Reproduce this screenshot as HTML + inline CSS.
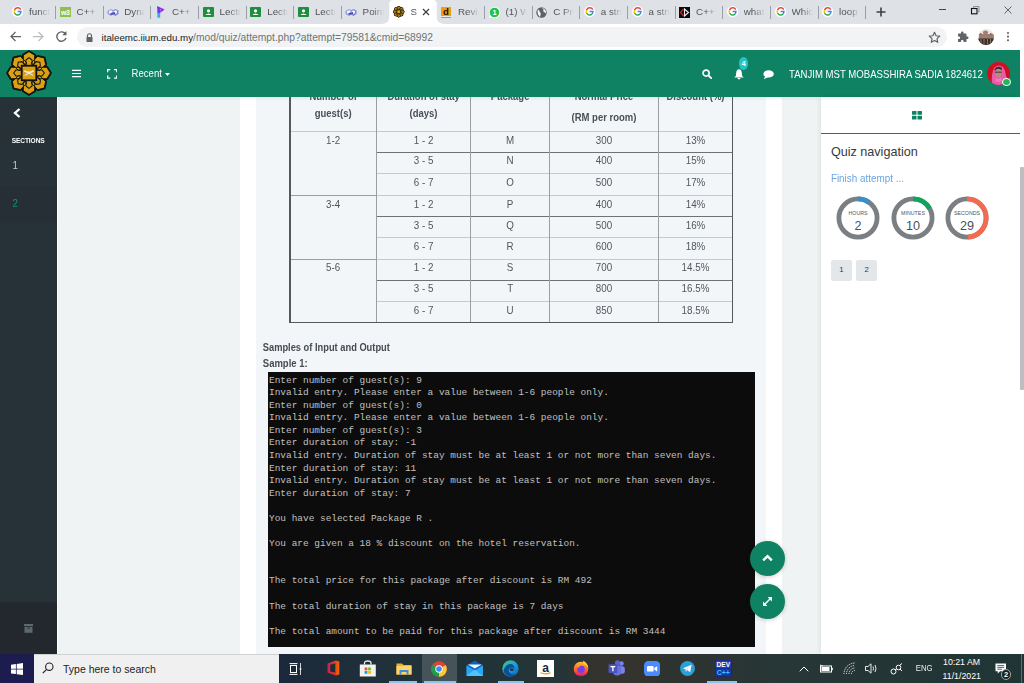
<!DOCTYPE html>
<html><head><meta charset="utf-8">
<style>
*{margin:0;padding:0;box-sizing:border-box}
html,body{width:1024px;height:683px;overflow:hidden;background:#fff;font-family:"Liberation Sans",sans-serif}
.a{position:absolute}
.t{position:absolute;white-space:nowrap;line-height:1}
#tabs{left:0;top:0;width:1024px;height:24px;background:#dee1e6}
#toolbar{left:0;top:24px;width:1024px;height:26px;background:#fff}
#omni{left:77px;top:27px;width:870px;height:20px;border-radius:10px;background:#f1f3f4}
#nav{left:0;top:50px;width:1020px;height:47px;background:#0f8264}
#side{left:0;top:97px;width:57px;height:557px;background:#273238}
#sidefoot{left:0;top:602px;width:57px;height:52px;background:#22282e}
#content{left:57px;top:97px;width:764px;height:557px;background:#eff3f4}
#col{left:240px;top:97px;width:542px;height:557px;background:#fff}
#qbox{left:256px;top:97px;width:510px;height:557px;background:#f3f6f9}
#drawer{left:821px;top:97px;width:199px;height:557px;background:#fff;box-shadow:-2px 0 4px rgba(0,0,0,.06)}
#sb{left:1020px;top:50px;width:4px;height:604px;background:#fff}
#taskbar{left:0;top:654px;width:1024px;height:29px;background:linear-gradient(90deg,#1d1c4e 0px,#1d1c4e 34px,#1b283b 280px,#20313a 385px,#223337 490px,#253538 560px,#35332d 600px,#35332e 630px,#2e332f 670px,#283636 770px,#1f3535 1024px)}
.tabtxt{position:absolute;top:6.3px;font-size:9.8px;color:#505357;white-space:nowrap;overflow:hidden;width:21px;line-height:11px;
 -webkit-mask-image:linear-gradient(90deg,#000 45%,transparent 100%)}
.sep{position:absolute;top:6px;width:1px;height:13px;background:#9aa0a6}
.con{position:absolute;left:268px;top:372px;width:487px;height:275px;background:#0c0c0c}
.cl{position:absolute;left:269px;font-family:"Liberation Mono",monospace;font-size:9.45px;color:#c0c0c0;white-space:pre;line-height:1}
.td{position:absolute;font-size:9.6px;color:#495057;white-space:nowrap;line-height:1;text-align:center}
</style></head><body>
<div id="tabs" class="a"></div>
<div id="toolbar" class="a"></div>
<div id="omni" class="a"></div>
<div id="nav" class="a"></div>
<div id="content" class="a"></div>
<div id="col" class="a"></div>
<div id="qbox" class="a"></div>
<div id="side" class="a"></div>
<div id="sidefoot" class="a"></div>
<div id="drawer" class="a"></div>
<div id="sb" class="a"></div>
<div id="taskbar" class="a"></div>
<svg class="a" style="left:380.6px;top:0" width="64" height="24" viewBox="0 0 63.66 24"><path d="M0 24 Q8 24 8 17 V4 Q8 0 12 0 H51.66 Q55.66 0 55.66 4 V17 Q55.66 24 63.66 24Z" fill="#fff"/></svg>
<svg class="a" style="left:12.0px;top:6.4px" width="11.2" height="11.2" viewBox="-6 -6 12 12"><circle r="6" fill="#fff"/><g fill="none" stroke-width="1.55"><path d="M3.4 -2.2 A3.65 3.65 0 0 0 -3.3 -1.5" stroke="#ea4335"/><path d="M-3.3 -1.5 A3.65 3.65 0 0 0 -3.3 1.5" stroke="#fbbc05"/><path d="M-3.3 1.5 A3.65 3.65 0 0 0 2.6 2.6" stroke="#34a853"/><path d="M2.6 2.6 A3.65 3.65 0 0 0 3.65 0 H0" stroke="#4285f4"/></g></svg>
<div class="tabtxt" style="left:29.0px">funct</div>
<div class="sep" style="left:55px"></div>
<div class="a" style="left:59.7px;top:7px;width:11px;height:10px;background:#8cc04f"></div><div class="t" style="left:59.7px;top:8.5px;width:11px;text-align:center;font-size:7px;font-weight:bold;color:#fff;letter-spacing:-0.5px">w3</div>
<div class="tabtxt" style="left:76.6px">C++</div>
<div class="sep" style="left:103px"></div>
<svg class="a" style="left:106.9px;top:7.5px" width="12" height="9" viewBox="0 0 12 9"><path d="M0.5 3 L4 1 L7 2.5 L7 6 L4 8 L0.5 6Z" fill="#9c9ee6"/><path d="M5 3 L8.5 1 L11.5 2.5 L11.5 6 L8.5 8 L5 6Z" fill="#8486d8"/><path d="M2 3.2 L4 2.2 L5.5 3 L5.5 5 L3.5 6 L2 5.2Z M6.5 3.2 L8.5 2.2 L10 3 L10 5 L8 6 L6.5 5.2Z" fill="#f4f4ff"/><path d="M3.5 5 L8 4 L8 6 L3.5 7Z" fill="#4e50a8"/></svg>
<div class="tabtxt" style="left:124.3px">Dyna</div>
<div class="sep" style="left:150px"></div>
<svg class="a" style="left:156.5px;top:6px" width="8" height="12" viewBox="0 0 8 12"><path d="M0.3 0.3 L7.7 3.6 L3.2 6.8 L3.2 4.2 L4.2 3.6 L0.3 2.2Z" fill="#8f2fe6"/><path d="M0.3 0.3 L3.2 1.6 L3.2 7 L0.3 7Z" fill="#6a3cf0"/><path d="M0.3 7 L3.2 7 L3.2 11.7 L0.3 11.7Z" fill="#2bb0f7"/></svg>
<div class="tabtxt" style="left:171.9px">C++</div>
<div class="sep" style="left:198px"></div>
<svg class="a" style="left:202.7px;top:7px" width="11" height="10" viewBox="0 0 11 10"><rect width="11" height="10" rx="1" fill="#1e8e3e"/><circle cx="5.5" cy="3.8" r="1.6" fill="#fff"/><path d="M2.2 8 Q5.5 4.8 8.8 8Z" fill="#fff"/></svg>
<div class="tabtxt" style="left:219.6px">Lectu</div>
<div class="sep" style="left:246px"></div>
<svg class="a" style="left:250.3px;top:7px" width="11" height="10" viewBox="0 0 11 10"><rect width="11" height="10" rx="1" fill="#1e8e3e"/><circle cx="5.5" cy="3.8" r="1.6" fill="#fff"/><path d="M2.2 8 Q5.5 4.8 8.8 8Z" fill="#fff"/></svg>
<div class="tabtxt" style="left:267.2px">Lectu</div>
<div class="sep" style="left:293px"></div>
<svg class="a" style="left:298.0px;top:7px" width="11" height="10" viewBox="0 0 11 10"><rect width="11" height="10" rx="1" fill="#1e8e3e"/><circle cx="5.5" cy="3.8" r="1.6" fill="#fff"/><path d="M2.2 8 Q5.5 4.8 8.8 8Z" fill="#fff"/></svg>
<div class="tabtxt" style="left:314.9px">Lectu</div>
<div class="sep" style="left:341px"></div>
<svg class="a" style="left:345.2px;top:7.5px" width="12" height="9" viewBox="0 0 12 9"><path d="M0.5 3 L4 1 L7 2.5 L7 6 L4 8 L0.5 6Z" fill="#9c9ee6"/><path d="M5 3 L8.5 1 L11.5 2.5 L11.5 6 L8.5 8 L5 6Z" fill="#8486d8"/><path d="M2 3.2 L4 2.2 L5.5 3 L5.5 5 L3.5 6 L2 5.2Z M6.5 3.2 L8.5 2.2 L10 3 L10 5 L8 6 L6.5 5.2Z" fill="#f4f4ff"/><path d="M3.5 5 L8 4 L8 6 L3.5 7Z" fill="#4e50a8"/></svg>
<div class="tabtxt" style="left:362.6px">Point</div>
<svg class="a" style="left:393.05px;top:6.25px" width="11.5" height="11.5" viewBox="-24 -24 48 48"><path transform="rotate(0)" d="M0 -22.3 L5.9 -18.6 L5.9 -9.5 L0 -5 L-5.9 -9.5 L-5.9 -18.6Z" fill="#111" stroke="#111" stroke-width="4.800000000000001" stroke-linejoin="round"/><path transform="rotate(45)" d="M0 -22.3 L5.9 -18.6 L5.9 -9.5 L0 -5 L-5.9 -9.5 L-5.9 -18.6Z" fill="#111" stroke="#111" stroke-width="4.800000000000001" stroke-linejoin="round"/><path transform="rotate(90)" d="M0 -22.3 L5.9 -18.6 L5.9 -9.5 L0 -5 L-5.9 -9.5 L-5.9 -18.6Z" fill="#111" stroke="#111" stroke-width="4.800000000000001" stroke-linejoin="round"/><path transform="rotate(135)" d="M0 -22.3 L5.9 -18.6 L5.9 -9.5 L0 -5 L-5.9 -9.5 L-5.9 -18.6Z" fill="#111" stroke="#111" stroke-width="4.800000000000001" stroke-linejoin="round"/><path transform="rotate(180)" d="M0 -22.3 L5.9 -18.6 L5.9 -9.5 L0 -5 L-5.9 -9.5 L-5.9 -18.6Z" fill="#111" stroke="#111" stroke-width="4.800000000000001" stroke-linejoin="round"/><path transform="rotate(225)" d="M0 -22.3 L5.9 -18.6 L5.9 -9.5 L0 -5 L-5.9 -9.5 L-5.9 -18.6Z" fill="#111" stroke="#111" stroke-width="4.800000000000001" stroke-linejoin="round"/><path transform="rotate(270)" d="M0 -22.3 L5.9 -18.6 L5.9 -9.5 L0 -5 L-5.9 -9.5 L-5.9 -18.6Z" fill="#111" stroke="#111" stroke-width="4.800000000000001" stroke-linejoin="round"/><path transform="rotate(315)" d="M0 -22.3 L5.9 -18.6 L5.9 -9.5 L0 -5 L-5.9 -9.5 L-5.9 -18.6Z" fill="#111" stroke="#111" stroke-width="4.800000000000001" stroke-linejoin="round"/><path transform="rotate(0)" d="M0 -22.3 L5.9 -18.6 L5.9 -9.5 L0 -5 L-5.9 -9.5 L-5.9 -18.6Z" fill="#daa112"/><path transform="rotate(45)" d="M0 -22.3 L5.9 -18.6 L5.9 -9.5 L0 -5 L-5.9 -9.5 L-5.9 -18.6Z" fill="#daa112"/><path transform="rotate(90)" d="M0 -22.3 L5.9 -18.6 L5.9 -9.5 L0 -5 L-5.9 -9.5 L-5.9 -18.6Z" fill="#daa112"/><path transform="rotate(135)" d="M0 -22.3 L5.9 -18.6 L5.9 -9.5 L0 -5 L-5.9 -9.5 L-5.9 -18.6Z" fill="#daa112"/><path transform="rotate(180)" d="M0 -22.3 L5.9 -18.6 L5.9 -9.5 L0 -5 L-5.9 -9.5 L-5.9 -18.6Z" fill="#daa112"/><path transform="rotate(225)" d="M0 -22.3 L5.9 -18.6 L5.9 -9.5 L0 -5 L-5.9 -9.5 L-5.9 -18.6Z" fill="#daa112"/><path transform="rotate(270)" d="M0 -22.3 L5.9 -18.6 L5.9 -9.5 L0 -5 L-5.9 -9.5 L-5.9 -18.6Z" fill="#daa112"/><path transform="rotate(315)" d="M0 -22.3 L5.9 -18.6 L5.9 -9.5 L0 -5 L-5.9 -9.5 L-5.9 -18.6Z" fill="#daa112"/><path transform="rotate(0)" d="M0 -22.3 L5.9 -18.6 L5.9 -9.5 L0 -5 L-5.9 -9.5 L-5.9 -18.6Z" fill="none" stroke="#111" stroke-width="1.4400000000000002"/><path transform="rotate(45)" d="M0 -22.3 L5.9 -18.6 L5.9 -9.5 L0 -5 L-5.9 -9.5 L-5.9 -18.6Z" fill="none" stroke="#111" stroke-width="1.4400000000000002"/><path transform="rotate(90)" d="M0 -22.3 L5.9 -18.6 L5.9 -9.5 L0 -5 L-5.9 -9.5 L-5.9 -18.6Z" fill="none" stroke="#111" stroke-width="1.4400000000000002"/><path transform="rotate(135)" d="M0 -22.3 L5.9 -18.6 L5.9 -9.5 L0 -5 L-5.9 -9.5 L-5.9 -18.6Z" fill="none" stroke="#111" stroke-width="1.4400000000000002"/><path transform="rotate(180)" d="M0 -22.3 L5.9 -18.6 L5.9 -9.5 L0 -5 L-5.9 -9.5 L-5.9 -18.6Z" fill="none" stroke="#111" stroke-width="1.4400000000000002"/><path transform="rotate(225)" d="M0 -22.3 L5.9 -18.6 L5.9 -9.5 L0 -5 L-5.9 -9.5 L-5.9 -18.6Z" fill="none" stroke="#111" stroke-width="1.4400000000000002"/><path transform="rotate(270)" d="M0 -22.3 L5.9 -18.6 L5.9 -9.5 L0 -5 L-5.9 -9.5 L-5.9 -18.6Z" fill="none" stroke="#111" stroke-width="1.4400000000000002"/><path transform="rotate(315)" d="M0 -22.3 L5.9 -18.6 L5.9 -9.5 L0 -5 L-5.9 -9.5 L-5.9 -18.6Z" fill="none" stroke="#111" stroke-width="1.4400000000000002"/><circle r="9.5" fill="#daa112"/><path transform="rotate(0)" d="M-3.2 -7 L-3.2 -13.6 L0 -16 L3.2 -13.6 L3.2 -7" fill="none" stroke="#111" stroke-width="1.7600000000000002"/><path transform="rotate(45)" d="M-3.2 -7 L-3.2 -13.6 L0 -16 L3.2 -13.6 L3.2 -7" fill="none" stroke="#111" stroke-width="1.7600000000000002"/><path transform="rotate(90)" d="M-3.2 -7 L-3.2 -13.6 L0 -16 L3.2 -13.6 L3.2 -7" fill="none" stroke="#111" stroke-width="1.7600000000000002"/><path transform="rotate(135)" d="M-3.2 -7 L-3.2 -13.6 L0 -16 L3.2 -13.6 L3.2 -7" fill="none" stroke="#111" stroke-width="1.7600000000000002"/><path transform="rotate(180)" d="M-3.2 -7 L-3.2 -13.6 L0 -16 L3.2 -13.6 L3.2 -7" fill="none" stroke="#111" stroke-width="1.7600000000000002"/><path transform="rotate(225)" d="M-3.2 -7 L-3.2 -13.6 L0 -16 L3.2 -13.6 L3.2 -7" fill="none" stroke="#111" stroke-width="1.7600000000000002"/><path transform="rotate(270)" d="M-3.2 -7 L-3.2 -13.6 L0 -16 L3.2 -13.6 L3.2 -7" fill="none" stroke="#111" stroke-width="1.7600000000000002"/><path transform="rotate(315)" d="M-3.2 -7 L-3.2 -13.6 L0 -16 L3.2 -13.6 L3.2 -7" fill="none" stroke="#111" stroke-width="1.7600000000000002"/><rect x="-7.6" y="-7.6" width="15.2" height="15.2" fill="#daa112" stroke="#111" stroke-width="3.04"/></svg>
<div class="tabtxt" style="left:410.6px;width:9px">S</div>
<svg class="a" style="left:421.6px;top:8px" width="8" height="8" viewBox="0 0 8 8"><path d="M1 1L7 7M7 1L1 7" stroke="#3c4043" stroke-width="1.2"/></svg>
<div class="a" style="left:441.0px;top:7px;width:10px;height:10px;background:#f39c12;border-bottom:1px solid #e8e8e8;box-shadow:0 1px 0 #999"></div><div class="t" style="left:442.9px;top:7.4px;font-size:9.5px;font-weight:bold;color:#111">d</div>
<div class="tabtxt" style="left:457.9px">Revie</div>
<div class="sep" style="left:484px"></div>
<svg class="a" style="left:487.6px;top:5.5px" width="13" height="13" viewBox="-6.5 -6.5 13 13"><path d="M-5.6 5.6 L-4.6 2.6 A5.5 5.5 0 1 1 -2.4 4.8Z" fill="#fff"/><circle r="4.8" fill="#25c24f"/><text x="0" y="2.7" font-size="7.5" font-weight="bold" text-anchor="middle" fill="#fff" font-family="Liberation Sans">1</text></svg>
<div class="tabtxt" style="left:505.5px">(1) W</div>
<div class="sep" style="left:532px"></div>
<svg class="a" style="left:536.3px;top:6.5px" width="11" height="11" viewBox="-5.5 -5.5 11 11"><circle r="5.2" fill="#5f6368"/><path d="M-3.8 -3 Q-1.5 -2.5 -1.8 -0.5 Q0 0.5 -1 2.5 L-1.5 4.5 Q-4.5 2 -3.8 -3Z M0.5 -4.8 Q2.8 -3 1.8 -1 Q3.5 0 4.6 1 Q5 -3 0.5 -4.8Z" fill="#fff" opacity=".95"/></svg>
<div class="tabtxt" style="left:553.2px">C Pro</div>
<div class="sep" style="left:579px"></div>
<svg class="a" style="left:583.8px;top:6.4px" width="11.2" height="11.2" viewBox="-6 -6 12 12"><circle r="6" fill="#fff"/><g fill="none" stroke-width="1.55"><path d="M3.4 -2.2 A3.65 3.65 0 0 0 -3.3 -1.5" stroke="#ea4335"/><path d="M-3.3 -1.5 A3.65 3.65 0 0 0 -3.3 1.5" stroke="#fbbc05"/><path d="M-3.3 1.5 A3.65 3.65 0 0 0 2.6 2.6" stroke="#34a853"/><path d="M2.6 2.6 A3.65 3.65 0 0 0 3.65 0 H0" stroke="#4285f4"/></g></svg>
<div class="tabtxt" style="left:600.8px">a stru</div>
<div class="sep" style="left:627px"></div>
<svg class="a" style="left:631.5px;top:6.4px" width="11.2" height="11.2" viewBox="-6 -6 12 12"><circle r="6" fill="#fff"/><g fill="none" stroke-width="1.55"><path d="M3.4 -2.2 A3.65 3.65 0 0 0 -3.3 -1.5" stroke="#ea4335"/><path d="M-3.3 -1.5 A3.65 3.65 0 0 0 -3.3 1.5" stroke="#fbbc05"/><path d="M-3.3 1.5 A3.65 3.65 0 0 0 2.6 2.6" stroke="#34a853"/><path d="M2.6 2.6 A3.65 3.65 0 0 0 3.65 0 H0" stroke="#4285f4"/></g></svg>
<div class="tabtxt" style="left:648.5px">a stru</div>
<div class="sep" style="left:675px"></div>
<svg class="a" style="left:679.2px;top:6.5px" width="11" height="11" viewBox="0 0 11 11"><rect width="11" height="11" fill="#0a0a0a"/><path d="M4.5 2 L1.5 5.5 L4.5 9" fill="none" stroke="#c62828" stroke-width="1.2"/><path d="M5.5 2 L9.5 5.5 L5.5 9Z" fill="none" stroke="#eee" stroke-width="1.1"/></svg>
<div class="tabtxt" style="left:696.1px">C++</div>
<div class="sep" style="left:722px"></div>
<svg class="a" style="left:726.8px;top:6.4px" width="11.2" height="11.2" viewBox="-6 -6 12 12"><circle r="6" fill="#fff"/><g fill="none" stroke-width="1.55"><path d="M3.4 -2.2 A3.65 3.65 0 0 0 -3.3 -1.5" stroke="#ea4335"/><path d="M-3.3 -1.5 A3.65 3.65 0 0 0 -3.3 1.5" stroke="#fbbc05"/><path d="M-3.3 1.5 A3.65 3.65 0 0 0 2.6 2.6" stroke="#34a853"/><path d="M2.6 2.6 A3.65 3.65 0 0 0 3.65 0 H0" stroke="#4285f4"/></g></svg>
<div class="tabtxt" style="left:743.8px">what</div>
<div class="sep" style="left:770px"></div>
<svg class="a" style="left:774.5px;top:6.4px" width="11.2" height="11.2" viewBox="-6 -6 12 12"><circle r="6" fill="#fff"/><g fill="none" stroke-width="1.55"><path d="M3.4 -2.2 A3.65 3.65 0 0 0 -3.3 -1.5" stroke="#ea4335"/><path d="M-3.3 -1.5 A3.65 3.65 0 0 0 -3.3 1.5" stroke="#fbbc05"/><path d="M-3.3 1.5 A3.65 3.65 0 0 0 2.6 2.6" stroke="#34a853"/><path d="M2.6 2.6 A3.65 3.65 0 0 0 3.65 0 H0" stroke="#4285f4"/></g></svg>
<div class="tabtxt" style="left:791.5px">Whic</div>
<div class="sep" style="left:818px"></div>
<svg class="a" style="left:822.1px;top:6.4px" width="11.2" height="11.2" viewBox="-6 -6 12 12"><circle r="6" fill="#fff"/><g fill="none" stroke-width="1.55"><path d="M3.4 -2.2 A3.65 3.65 0 0 0 -3.3 -1.5" stroke="#ea4335"/><path d="M-3.3 -1.5 A3.65 3.65 0 0 0 -3.3 1.5" stroke="#fbbc05"/><path d="M-3.3 1.5 A3.65 3.65 0 0 0 2.6 2.6" stroke="#34a853"/><path d="M2.6 2.6 A3.65 3.65 0 0 0 3.65 0 H0" stroke="#4285f4"/></g></svg>
<div class="tabtxt" style="left:839.1px">loop</div>
<div class="sep" style="left:865px"></div>
<svg class="a" style="left:876px;top:7px" width="10" height="10" viewBox="0 0 10 10"><path d="M5 0.5V9.5M0.5 5H9.5" stroke="#3c4043" stroke-width="1.6"/></svg>
<div class="a" style="left:938.6px;top:9px;width:7.4px;height:1px;background:#444"></div>
<svg class="a" style="left:970px;top:5px" width="10" height="10" viewBox="0 0 10 10"><rect x="1.5" y="3.5" width="5.5" height="5.3" fill="none" stroke="#111" stroke-width="1.1"/><path d="M3.6 3.3V1.5H9V6.8H7.2" fill="none" stroke="#777" stroke-width=".8"/></svg>
<svg class="a" style="left:1003.5px;top:6px" width="8" height="8" viewBox="0 0 8 8"><path d="M0.5 0.5L7.5 7.5M7.5 0.5L0.5 7.5" stroke="#555" stroke-width=".9"/></svg>
<svg class="a" style="left:9px;top:30px" width="13" height="13" viewBox="0 0 13 13"><path d="M12 6.5H2M6.5 2L2 6.5L6.5 11" fill="none" stroke="#5f6368" stroke-width="1.25"/></svg>
<svg class="a" style="left:32px;top:30px" width="13" height="13" viewBox="0 0 13 13"><path d="M1 6.5H11M6.5 2L11 6.5L6.5 11" fill="none" stroke="#b9bcc0" stroke-width="1.25"/></svg>
<svg class="a" style="left:55px;top:30px" width="13" height="13" viewBox="0 0 13 13"><path d="M10.6 4.2A4.7 4.7 0 1 0 11 8" fill="none" stroke="#5f6368" stroke-width="1.4"/><path d="M11.5 1V5.2H7.3Z" fill="#5f6368"/></svg>
<svg class="a" style="left:86px;top:33px" width="7" height="9" viewBox="0 0 7 9"><path d="M1.5 4V2.8A2 2 0 0 1 5.5 2.8V4" fill="none" stroke="#5f6368" stroke-width="1.1"/><rect x="0.5" y="4" width="6" height="5" rx=".5" fill="#5f6368"/></svg>
<div class="t" style="left:101.5px;top:33px;font-size:9.75px;color:#202124">italeemc.iium.edu.my<span style="color:#6f7377;font-size:10.3px">/mod/quiz/attempt.php?attempt=79581&amp;cmid=68992</span></div>
<svg class="a" style="left:928px;top:31px" width="13" height="13" viewBox="0 0 24 24"><path d="M12 2.5l2.9 6.3 6.8.7-5.1 4.6 1.4 6.8L12 17.4l-6 3.5 1.4-6.8-5.1-4.6 6.8-.7z" fill="none" stroke="#5f6368" stroke-width="2.2" stroke-linejoin="round"/></svg>
<svg class="a" style="left:957px;top:31px" width="12" height="12" viewBox="0 0 24 24"><path d="M20.5 11H19V7c0-1.1-.9-2-2-2h-4V3.5C13 2.1 11.9 1 10.5 1S8 2.1 8 3.5V5H4c-1.1 0-2 .9-2 2v3.8h1.5c1.5 0 2.7 1.2 2.7 2.7S5 16.2 3.5 16.2H2V20c0 1.1.9 2 2 2h3.8v-1.5c0-1.5 1.2-2.7 2.7-2.7s2.7 1.2 2.7 2.7V22H17c1.1 0 2-.9 2-2v-4h1.5c1.4 0 2.5-1.1 2.5-2.5S21.9 11 20.5 11z" fill="#5f6368"/></svg>
<svg class="a" style="left:978px;top:29px" width="16" height="16" viewBox="0 0 16 16"><defs><clipPath id="avb"><circle cx="8" cy="8" r="8"/></clipPath></defs><g clip-path="url(#avb)"><rect width="16" height="16" fill="#ece6e2"/><ellipse cx="7.5" cy="3.5" rx="2.6" ry="2" fill="#a8787a"/><rect x="1" y="5" width="15" height="5" fill="#9c7e6c"/><rect x="0" y="9.5" width="16" height="7" fill="#3a302a"/><path d="M3 10V15M6 10V15M9.5 10V15M12.5 10V15" stroke="#8a7464" stroke-width="1"/><rect x="2" y="4" width="1.5" height="2" fill="#8a6a60"/><rect x="12" y="4" width="1.5" height="2" fill="#8a6a60"/></g></svg>
<svg class="a" style="left:1006px;top:31px" width="4" height="11" viewBox="0 0 4 11"><circle cx="2" cy="2" r="1.05" fill="#5f6368"/><circle cx="2" cy="5.6" r="1.05" fill="#5f6368"/><circle cx="2" cy="9.2" r="1.05" fill="#5f6368"/></svg>
<svg class="a" style="left:5.5px;top:50.2px" width="46" height="46" viewBox="-24 -24 48 48"><path transform="rotate(0)" d="M0 -22.3 L5.9 -18.6 L5.9 -9.5 L0 -5 L-5.9 -9.5 L-5.9 -18.6Z" fill="#111" stroke="#111" stroke-width="3.0" stroke-linejoin="round"/><path transform="rotate(45)" d="M0 -22.3 L5.9 -18.6 L5.9 -9.5 L0 -5 L-5.9 -9.5 L-5.9 -18.6Z" fill="#111" stroke="#111" stroke-width="3.0" stroke-linejoin="round"/><path transform="rotate(90)" d="M0 -22.3 L5.9 -18.6 L5.9 -9.5 L0 -5 L-5.9 -9.5 L-5.9 -18.6Z" fill="#111" stroke="#111" stroke-width="3.0" stroke-linejoin="round"/><path transform="rotate(135)" d="M0 -22.3 L5.9 -18.6 L5.9 -9.5 L0 -5 L-5.9 -9.5 L-5.9 -18.6Z" fill="#111" stroke="#111" stroke-width="3.0" stroke-linejoin="round"/><path transform="rotate(180)" d="M0 -22.3 L5.9 -18.6 L5.9 -9.5 L0 -5 L-5.9 -9.5 L-5.9 -18.6Z" fill="#111" stroke="#111" stroke-width="3.0" stroke-linejoin="round"/><path transform="rotate(225)" d="M0 -22.3 L5.9 -18.6 L5.9 -9.5 L0 -5 L-5.9 -9.5 L-5.9 -18.6Z" fill="#111" stroke="#111" stroke-width="3.0" stroke-linejoin="round"/><path transform="rotate(270)" d="M0 -22.3 L5.9 -18.6 L5.9 -9.5 L0 -5 L-5.9 -9.5 L-5.9 -18.6Z" fill="#111" stroke="#111" stroke-width="3.0" stroke-linejoin="round"/><path transform="rotate(315)" d="M0 -22.3 L5.9 -18.6 L5.9 -9.5 L0 -5 L-5.9 -9.5 L-5.9 -18.6Z" fill="#111" stroke="#111" stroke-width="3.0" stroke-linejoin="round"/><path transform="rotate(0)" d="M0 -22.3 L5.9 -18.6 L5.9 -9.5 L0 -5 L-5.9 -9.5 L-5.9 -18.6Z" fill="#daa112"/><path transform="rotate(45)" d="M0 -22.3 L5.9 -18.6 L5.9 -9.5 L0 -5 L-5.9 -9.5 L-5.9 -18.6Z" fill="#daa112"/><path transform="rotate(90)" d="M0 -22.3 L5.9 -18.6 L5.9 -9.5 L0 -5 L-5.9 -9.5 L-5.9 -18.6Z" fill="#daa112"/><path transform="rotate(135)" d="M0 -22.3 L5.9 -18.6 L5.9 -9.5 L0 -5 L-5.9 -9.5 L-5.9 -18.6Z" fill="#daa112"/><path transform="rotate(180)" d="M0 -22.3 L5.9 -18.6 L5.9 -9.5 L0 -5 L-5.9 -9.5 L-5.9 -18.6Z" fill="#daa112"/><path transform="rotate(225)" d="M0 -22.3 L5.9 -18.6 L5.9 -9.5 L0 -5 L-5.9 -9.5 L-5.9 -18.6Z" fill="#daa112"/><path transform="rotate(270)" d="M0 -22.3 L5.9 -18.6 L5.9 -9.5 L0 -5 L-5.9 -9.5 L-5.9 -18.6Z" fill="#daa112"/><path transform="rotate(315)" d="M0 -22.3 L5.9 -18.6 L5.9 -9.5 L0 -5 L-5.9 -9.5 L-5.9 -18.6Z" fill="#daa112"/><path transform="rotate(0)" d="M0 -22.3 L5.9 -18.6 L5.9 -9.5 L0 -5 L-5.9 -9.5 L-5.9 -18.6Z" fill="none" stroke="#111" stroke-width="0.9"/><path transform="rotate(45)" d="M0 -22.3 L5.9 -18.6 L5.9 -9.5 L0 -5 L-5.9 -9.5 L-5.9 -18.6Z" fill="none" stroke="#111" stroke-width="0.9"/><path transform="rotate(90)" d="M0 -22.3 L5.9 -18.6 L5.9 -9.5 L0 -5 L-5.9 -9.5 L-5.9 -18.6Z" fill="none" stroke="#111" stroke-width="0.9"/><path transform="rotate(135)" d="M0 -22.3 L5.9 -18.6 L5.9 -9.5 L0 -5 L-5.9 -9.5 L-5.9 -18.6Z" fill="none" stroke="#111" stroke-width="0.9"/><path transform="rotate(180)" d="M0 -22.3 L5.9 -18.6 L5.9 -9.5 L0 -5 L-5.9 -9.5 L-5.9 -18.6Z" fill="none" stroke="#111" stroke-width="0.9"/><path transform="rotate(225)" d="M0 -22.3 L5.9 -18.6 L5.9 -9.5 L0 -5 L-5.9 -9.5 L-5.9 -18.6Z" fill="none" stroke="#111" stroke-width="0.9"/><path transform="rotate(270)" d="M0 -22.3 L5.9 -18.6 L5.9 -9.5 L0 -5 L-5.9 -9.5 L-5.9 -18.6Z" fill="none" stroke="#111" stroke-width="0.9"/><path transform="rotate(315)" d="M0 -22.3 L5.9 -18.6 L5.9 -9.5 L0 -5 L-5.9 -9.5 L-5.9 -18.6Z" fill="none" stroke="#111" stroke-width="0.9"/><circle r="9.5" fill="#daa112"/><path transform="rotate(0)" d="M-3.2 -7 L-3.2 -13.6 L0 -16 L3.2 -13.6 L3.2 -7" fill="none" stroke="#111" stroke-width="1.1"/><path transform="rotate(45)" d="M-3.2 -7 L-3.2 -13.6 L0 -16 L3.2 -13.6 L3.2 -7" fill="none" stroke="#111" stroke-width="1.1"/><path transform="rotate(90)" d="M-3.2 -7 L-3.2 -13.6 L0 -16 L3.2 -13.6 L3.2 -7" fill="none" stroke="#111" stroke-width="1.1"/><path transform="rotate(135)" d="M-3.2 -7 L-3.2 -13.6 L0 -16 L3.2 -13.6 L3.2 -7" fill="none" stroke="#111" stroke-width="1.1"/><path transform="rotate(180)" d="M-3.2 -7 L-3.2 -13.6 L0 -16 L3.2 -13.6 L3.2 -7" fill="none" stroke="#111" stroke-width="1.1"/><path transform="rotate(225)" d="M-3.2 -7 L-3.2 -13.6 L0 -16 L3.2 -13.6 L3.2 -7" fill="none" stroke="#111" stroke-width="1.1"/><path transform="rotate(270)" d="M-3.2 -7 L-3.2 -13.6 L0 -16 L3.2 -13.6 L3.2 -7" fill="none" stroke="#111" stroke-width="1.1"/><path transform="rotate(315)" d="M-3.2 -7 L-3.2 -13.6 L0 -16 L3.2 -13.6 L3.2 -7" fill="none" stroke="#111" stroke-width="1.1"/><rect x="-7.6" y="-7.6" width="15.2" height="15.2" fill="#daa112" stroke="#111" stroke-width="1.9"/><path d="M-5 -2 L4.5 2.5 M5 -2 L-4.5 2.5" stroke="#eee" stroke-width="1.1"/><path d="M-4.5 -2.2 Q0 0.5 4.5 -2.2" stroke="#e8e8e8" stroke-width="1.5" fill="none"/></svg>
<svg class="a" style="left:72.1px;top:69px" width="9.3" height="9" viewBox="0 0 9.3 9"><path d="M0 1.3H9.3M0 4.5H9.3M0 7.6H9.3" stroke="#fff" stroke-width="1.25"/></svg>
<svg class="a" style="left:106.8px;top:69px" width="10.4" height="9.8" viewBox="0 0 10.4 9.8"><path d="M0.65 3.2V0.65H3.3M7.1 0.65H9.75V3.2M9.75 6.6V9.15H7.1M3.3 9.15H0.65V6.6" fill="none" stroke="#fff" stroke-width="1.3"/></svg>
<div class="t" style="left:131.5px;top:69.4px;font-size:9.6px;color:#fff;transform:scaleY(1.17);transform-origin:0 8.13px">Recent</div>
<svg class="a" style="left:165px;top:72.5px" width="5" height="3" viewBox="0 0 5 3"><path d="M0 0H5L2.5 3Z" fill="#fff"/></svg>
<svg class="a" style="left:701.8px;top:69px" width="10" height="10" viewBox="0 0 10 10"><circle cx="4.1" cy="4.1" r="3.05" fill="none" stroke="#fff" stroke-width="1.7"/><path d="M6.4 6.4L9.2 9.2" stroke="#fff" stroke-width="1.8" stroke-linecap="round"/></svg>
<svg class="a" style="left:734px;top:68.6px" width="10" height="11" viewBox="0 0 10 11"><path d="M5 0.3C3.3 0.3 2.4 1.8 2.2 3.8L1.9 6.6Q1.4 8 0.2 8.5H9.8Q8.6 8 8.1 6.6L7.8 3.8C7.6 1.8 6.7 0.3 5 0.3Z" fill="#fff"/><path d="M3.6 9A1.4 1.4 0 0 0 6.4 9Z" fill="#fff"/></svg>
<div class="a" style="left:738.7px;top:57.2px;width:9.8px;height:12.8px;border-radius:50%;background:#22c4c7"></div>
<div class="t" style="left:741.5px;top:59.6px;font-size:7.6px;font-weight:bold;color:#fff">4</div>
<svg class="a" style="left:763px;top:70px" width="11" height="9.5" viewBox="0 0 11 9.5"><ellipse cx="5.6" cy="3.9" rx="5.2" ry="3.6" fill="#fff"/><path d="M2.5 6L0.6 9.2L5 7.2Z" fill="#fff"/></svg>
<div class="t" style="left:789px;top:69.6px;font-size:9.6px;color:#fff;transform:scaleY(1.2);transform-origin:0 8.13px">TANJIM MST MOBASSHIRA SADIA 1824612</div>
<svg class="a" style="left:987px;top:62.3px" width="23" height="23" viewBox="0 0 23 23"><defs><clipPath id="avc"><circle cx="11.5" cy="11.5" r="11.4"/></clipPath></defs><g clip-path="url(#avc)"><rect width="23" height="23" fill="#d0101e"/><path d="M5 23 Q4 12 7 6 Q11 1.5 16 5 Q19 9 19 14 Q21 18 23 23Z" fill="#ea5aa8"/><path d="M7.5 7 Q11 3 15 6 L14.5 8 Q11 6 8 9Z" fill="#3a2a2a"/><ellipse cx="11.3" cy="11" rx="3.3" ry="4.3" fill="#b58a80"/><path d="M7.8 10.2H14.8" stroke="#333" stroke-width=".9"/><path d="M9 16 Q11.5 18 14 15.5 L15 19 Q11 21 8 19Z" fill="#f07ab8"/></g></svg>
<div class="a" style="left:1002px;top:77.8px;width:8.5px;height:8.5px;border-radius:50%;background:#22b659;border:1.5px solid #fff"></div>
<div class="a" style="left:57px;top:97px;width:963px;height:4px;background:linear-gradient(rgba(0,0,0,.06),rgba(0,0,0,0))"></div>
<div class="a" style="left:0;top:186px;width:57px;height:36.5px;background:#252f35"></div>
<div class="a" style="left:57px;top:97px;width:1px;height:557px;background:#fff"></div>
<svg class="a" style="left:12.5px;top:108px" width="8" height="10" viewBox="0 0 8 10"><path d="M6.5 1L2 5L6.5 9" fill="none" stroke="#fff" stroke-width="2.3"/></svg>
<div class="t" style="left:11.7px;top:138.2px;font-size:6.6px;font-weight:bold;color:#fff;letter-spacing:-0.1px;transform:scaleY(1.15);transform-origin:0 5.6px">SECTIONS</div>
<div class="t" style="left:12.5px;top:161px;font-size:9.8px;color:#c4c9cc;transform:scaleY(1.2);transform-origin:0 8.3px">1</div>
<div class="t" style="left:12.5px;top:199px;font-size:9.8px;color:#18906c;transform:scaleY(1.2);transform-origin:0 8.3px">2</div>
<svg class="a" style="left:24px;top:624px" width="9" height="9" viewBox="0 0 9 9"><rect x="0" y="0" width="9" height="2" fill="#5d6970"/><rect x="0.5" y="2.8" width="8" height="6" fill="#5d6970"/><path d="M3 4.2H6" stroke="#22292f" stroke-width=".8"/></svg>
<div class="a" style="left:0;top:97px;width:1024px;height:557px;overflow:hidden"><div class="a" style="left:0;top:-97px;width:1024px;height:683px">
<div class="a" style="left:290.0px;top:131.00px;width:442.5px;height:1px;background:#c6c8ca"></div>
<div class="a" style="left:376.3px;top:152.00px;width:356.2px;height:1px;background:#6f7275"></div>
<div class="a" style="left:376.3px;top:173.00px;width:356.2px;height:1px;background:#c6c8ca"></div>
<div class="a" style="left:376.3px;top:195.00px;width:356.2px;height:1px;background:#c6c8ca"></div>
<div class="a" style="left:376.3px;top:216.00px;width:356.2px;height:1px;background:#6f7275"></div>
<div class="a" style="left:376.3px;top:237.00px;width:356.2px;height:1px;background:#c6c8ca"></div>
<div class="a" style="left:376.3px;top:259.00px;width:356.2px;height:1px;background:#c6c8ca"></div>
<div class="a" style="left:376.3px;top:280.00px;width:356.2px;height:1px;background:#6f7275"></div>
<div class="a" style="left:376.3px;top:301.00px;width:356.2px;height:1px;background:#c6c8ca"></div>
<div class="a" style="left:290.0px;top:195.00px;width:86.3px;height:1px;background:#9c9ea0"></div>
<div class="a" style="left:290.0px;top:259.00px;width:86.3px;height:1px;background:#9c9ea0"></div>
<div class="a" style="left:289.40px;top:60.0px;width:1.2px;height:262.8px;background:#56595c"></div>
<div class="a" style="left:375.80px;top:60.0px;width:1px;height:262.8px;background:#9c9ea0"></div>
<div class="a" style="left:470.30px;top:60.0px;width:1px;height:262.8px;background:#9c9ea0"></div>
<div class="a" style="left:549.00px;top:60.0px;width:1px;height:262.8px;background:#9c9ea0"></div>
<div class="a" style="left:658.00px;top:60.0px;width:1px;height:262.8px;background:#9c9ea0"></div>
<div class="a" style="left:731.90px;top:60.0px;width:1.2px;height:262.8px;background:#56595c"></div>
<div class="a" style="left:289.3px;top:322.00px;width:443.8px;height:1.2px;background:#56595c"></div>
<div class="td" style="left:290.0px;width:86.3px;top:92.36px;font-size:9.5px;font-weight:bold;color:#495057;transform:scaleY(1.12);transform-origin:50% 8.04px">Number of</div>
<div class="td" style="left:290.0px;width:86.3px;top:108.96px;font-size:9.5px;font-weight:bold;color:#495057;transform:scaleY(1.12);transform-origin:50% 8.04px">guest(s)</div>
<div class="td" style="left:376.3px;width:94.5px;top:92.36px;font-size:9.5px;font-weight:bold;color:#495057;transform:scaleY(1.12);transform-origin:50% 8.04px">Duration of stay</div>
<div class="td" style="left:376.3px;width:94.5px;top:108.96px;font-size:9.5px;font-weight:bold;color:#495057;transform:scaleY(1.12);transform-origin:50% 8.04px">(days)</div>
<div class="td" style="left:470.8px;width:78.7px;top:92.36px;font-size:9.5px;font-weight:bold;color:#495057;transform:scaleY(1.12);transform-origin:50% 8.04px">Package</div>
<div class="td" style="left:549.5px;width:109.0px;top:92.36px;font-size:9.5px;font-weight:bold;color:#495057;transform:scaleY(1.12);transform-origin:50% 8.04px">Normal Price</div>
<div class="td" style="left:549.5px;width:109.0px;top:113.36px;font-size:9.5px;font-weight:bold;color:#495057;transform:scaleY(1.12);transform-origin:50% 8.04px">(RM per room)</div>
<div class="td" style="left:658.5px;width:74.0px;top:92.36px;font-size:9.5px;font-weight:bold;color:#495057;transform:scaleY(1.12);transform-origin:50% 8.04px">Discount (%)</div>
<div class="td" style="left:290.0px;width:86.3px;top:135.60px;font-size:9.8px;color:#50565b;transform:scaleY(1.12);transform-origin:50% 8.30px">1-2</div>
<div class="td" style="left:376.3px;width:94.5px;top:135.60px;font-size:9.8px;color:#50565b;transform:scaleY(1.12);transform-origin:50% 8.30px">1 - 2</div>
<div class="td" style="left:470.8px;width:78.7px;top:135.60px;font-size:9.8px;color:#50565b;transform:scaleY(1.12);transform-origin:50% 8.30px">M</div>
<div class="td" style="left:549.5px;width:109.0px;top:135.60px;font-size:9.8px;color:#50565b;transform:scaleY(1.12);transform-origin:50% 8.30px">300</div>
<div class="td" style="left:658.5px;width:74.0px;top:135.60px;font-size:9.8px;color:#50565b;transform:scaleY(1.12);transform-origin:50% 8.30px">13%</div>
<div class="td" style="left:376.3px;width:94.5px;top:156.30px;font-size:9.8px;color:#50565b;transform:scaleY(1.12);transform-origin:50% 8.30px">3 - 5</div>
<div class="td" style="left:470.8px;width:78.7px;top:156.30px;font-size:9.8px;color:#50565b;transform:scaleY(1.12);transform-origin:50% 8.30px">N</div>
<div class="td" style="left:549.5px;width:109.0px;top:156.30px;font-size:9.8px;color:#50565b;transform:scaleY(1.12);transform-origin:50% 8.30px">400</div>
<div class="td" style="left:658.5px;width:74.0px;top:156.30px;font-size:9.8px;color:#50565b;transform:scaleY(1.12);transform-origin:50% 8.30px">15%</div>
<div class="td" style="left:376.3px;width:94.5px;top:177.80px;font-size:9.8px;color:#50565b;transform:scaleY(1.12);transform-origin:50% 8.30px">6 - 7</div>
<div class="td" style="left:470.8px;width:78.7px;top:177.80px;font-size:9.8px;color:#50565b;transform:scaleY(1.12);transform-origin:50% 8.30px">O</div>
<div class="td" style="left:549.5px;width:109.0px;top:177.80px;font-size:9.8px;color:#50565b;transform:scaleY(1.12);transform-origin:50% 8.30px">500</div>
<div class="td" style="left:658.5px;width:74.0px;top:177.80px;font-size:9.8px;color:#50565b;transform:scaleY(1.12);transform-origin:50% 8.30px">17%</div>
<div class="td" style="left:290.0px;width:86.3px;top:199.50px;font-size:9.8px;color:#50565b;transform:scaleY(1.12);transform-origin:50% 8.30px">3-4</div>
<div class="td" style="left:376.3px;width:94.5px;top:199.50px;font-size:9.8px;color:#50565b;transform:scaleY(1.12);transform-origin:50% 8.30px">1 - 2</div>
<div class="td" style="left:470.8px;width:78.7px;top:199.50px;font-size:9.8px;color:#50565b;transform:scaleY(1.12);transform-origin:50% 8.30px">P</div>
<div class="td" style="left:549.5px;width:109.0px;top:199.50px;font-size:9.8px;color:#50565b;transform:scaleY(1.12);transform-origin:50% 8.30px">400</div>
<div class="td" style="left:658.5px;width:74.0px;top:199.50px;font-size:9.8px;color:#50565b;transform:scaleY(1.12);transform-origin:50% 8.30px">14%</div>
<div class="td" style="left:376.3px;width:94.5px;top:220.50px;font-size:9.8px;color:#50565b;transform:scaleY(1.12);transform-origin:50% 8.30px">3 - 5</div>
<div class="td" style="left:470.8px;width:78.7px;top:220.50px;font-size:9.8px;color:#50565b;transform:scaleY(1.12);transform-origin:50% 8.30px">Q</div>
<div class="td" style="left:549.5px;width:109.0px;top:220.50px;font-size:9.8px;color:#50565b;transform:scaleY(1.12);transform-origin:50% 8.30px">500</div>
<div class="td" style="left:658.5px;width:74.0px;top:220.50px;font-size:9.8px;color:#50565b;transform:scaleY(1.12);transform-origin:50% 8.30px">16%</div>
<div class="td" style="left:376.3px;width:94.5px;top:241.90px;font-size:9.8px;color:#50565b;transform:scaleY(1.12);transform-origin:50% 8.30px">6 - 7</div>
<div class="td" style="left:470.8px;width:78.7px;top:241.90px;font-size:9.8px;color:#50565b;transform:scaleY(1.12);transform-origin:50% 8.30px">R</div>
<div class="td" style="left:549.5px;width:109.0px;top:241.90px;font-size:9.8px;color:#50565b;transform:scaleY(1.12);transform-origin:50% 8.30px">600</div>
<div class="td" style="left:658.5px;width:74.0px;top:241.90px;font-size:9.8px;color:#50565b;transform:scaleY(1.12);transform-origin:50% 8.30px">18%</div>
<div class="td" style="left:290.0px;width:86.3px;top:263.10px;font-size:9.8px;color:#50565b;transform:scaleY(1.12);transform-origin:50% 8.30px">5-6</div>
<div class="td" style="left:376.3px;width:94.5px;top:263.10px;font-size:9.8px;color:#50565b;transform:scaleY(1.12);transform-origin:50% 8.30px">1 - 2</div>
<div class="td" style="left:470.8px;width:78.7px;top:263.10px;font-size:9.8px;color:#50565b;transform:scaleY(1.12);transform-origin:50% 8.30px">S</div>
<div class="td" style="left:549.5px;width:109.0px;top:263.10px;font-size:9.8px;color:#50565b;transform:scaleY(1.12);transform-origin:50% 8.30px">700</div>
<div class="td" style="left:658.5px;width:74.0px;top:263.10px;font-size:9.8px;color:#50565b;transform:scaleY(1.12);transform-origin:50% 8.30px">14.5%</div>
<div class="td" style="left:376.3px;width:94.5px;top:284.30px;font-size:9.8px;color:#50565b;transform:scaleY(1.12);transform-origin:50% 8.30px">3 - 5</div>
<div class="td" style="left:470.8px;width:78.7px;top:284.30px;font-size:9.8px;color:#50565b;transform:scaleY(1.12);transform-origin:50% 8.30px">T</div>
<div class="td" style="left:549.5px;width:109.0px;top:284.30px;font-size:9.8px;color:#50565b;transform:scaleY(1.12);transform-origin:50% 8.30px">800</div>
<div class="td" style="left:658.5px;width:74.0px;top:284.30px;font-size:9.8px;color:#50565b;transform:scaleY(1.12);transform-origin:50% 8.30px">16.5%</div>
<div class="td" style="left:376.3px;width:94.5px;top:305.50px;font-size:9.8px;color:#50565b;transform:scaleY(1.12);transform-origin:50% 8.30px">6 - 7</div>
<div class="td" style="left:470.8px;width:78.7px;top:305.50px;font-size:9.8px;color:#50565b;transform:scaleY(1.12);transform-origin:50% 8.30px">U</div>
<div class="td" style="left:549.5px;width:109.0px;top:305.50px;font-size:9.8px;color:#50565b;transform:scaleY(1.12);transform-origin:50% 8.30px">850</div>
<div class="td" style="left:658.5px;width:74.0px;top:305.50px;font-size:9.8px;color:#50565b;transform:scaleY(1.12);transform-origin:50% 8.30px">18.5%</div>
<div class="t" style="left:262.8px;top:344.2px;font-size:9.3px;font-weight:bold;color:#474c51;transform:scaleY(1.14);transform-origin:0 7.87px">Samples of Input and Output</div>
<div class="t" style="left:262.8px;top:359.3px;font-size:9.5px;font-weight:bold;color:#474c51;transform:scaleY(1.12);transform-origin:0 8.04px">Sample 1:</div>
<div class="con"></div>
<div class="cl" style="top:375.68px">Enter number of guest(s): 9</div>
<div class="cl" style="top:388.23px">Invalid entry. Please enter a value between 1-6 people only.</div>
<div class="cl" style="top:400.78px">Enter number of guest(s): 0</div>
<div class="cl" style="top:413.33px">Invalid entry. Please enter a value between 1-6 people only.</div>
<div class="cl" style="top:425.88px">Enter number of guest(s): 3</div>
<div class="cl" style="top:438.43px">Enter duration of stay: -1</div>
<div class="cl" style="top:450.98px">Invalid entry. Duration of stay must be at least 1 or not more than seven days.</div>
<div class="cl" style="top:463.53px">Enter duration of stay: 11</div>
<div class="cl" style="top:476.08px">Invalid entry. Duration of stay must be at least 1 or not more than seven days.</div>
<div class="cl" style="top:488.63px">Enter duration of stay: 7</div>
<div class="cl" style="top:513.73px">You have selected Package R .</div>
<div class="cl" style="top:538.83px">You are given a 18 % discount on the hotel reservation.</div>
<div class="cl" style="top:576.48px">The total price for this package after discount is RM 492</div>
<div class="cl" style="top:601.58px">The total duration of stay in this package is 7 days</div>
<div class="cl" style="top:626.68px">The total amount to be paid for this package after discount is RM 3444</div>
<div class="a" style="left:749.8px;top:541.3px;width:35.2px;height:35.2px;border-radius:50%;background:#0f8264;box-shadow:0 1px 4px rgba(0,0,0,.2)"></div>
<svg class="a" style="left:761.9px;top:554.4px" width="11" height="8" viewBox="0 0 11 8"><path d="M1.2 6.3L5.5 2.1L9.8 6.3" fill="none" stroke="#fff" stroke-width="2.4"/></svg>
<div class="a" style="left:749.8px;top:583.9px;width:35.2px;height:35.2px;border-radius:50%;background:#0f8264;box-shadow:0 1px 4px rgba(0,0,0,.2)"></div>
<svg class="a" style="left:761.9px;top:596.0px" width="11" height="11" viewBox="0 0 11 11"><path d="M2.5 8.5L8.5 2.5" stroke="#fff" stroke-width="1.6"/><path d="M5.6 1H10V5.4Z M1 5.6V10H5.4Z" fill="#fff"/></svg>
</div></div>
<svg class="a" style="left:912.3px;top:110.5px" width="10" height="9" viewBox="0 0 10 9"><rect x="0" y="0" width="4.5" height="3.8" rx=".6" fill="#0f8264"/><rect x="5.5" y="0" width="4.5" height="3.8" rx=".6" fill="#0f8264"/><rect x="0" y="4.8" width="4.5" height="3.8" rx=".6" fill="#0f8264"/><rect x="5.5" y="4.8" width="4.5" height="3.8" rx=".6" fill="#0f8264"/></svg>
<div class="a" style="left:821px;top:132.5px;width:199px;height:1.3px;background:#0f8264"></div>
<div class="t" style="left:830.9px;top:145.6px;font-size:12.6px;color:#373a3c">Quiz navigation</div>
<div class="t" style="left:830.9px;top:174.2px;font-size:9.9px;color:#6aa6e4;transform:scaleY(1.1);transform-origin:0 8.38px">Finish attempt ...</div>
<svg class="a" style="left:835.7px;top:196.2px" width="44" height="44" viewBox="-22 -22 44 44"><circle r="19.1" fill="#fff" stroke="#7b7e82" stroke-width="4.8"/><circle r="19.1" fill="none" stroke="#3c8dc5" stroke-width="4.8" stroke-dasharray="12.00 120.01" transform="rotate(-90)"/><text x="0" y="-3.2" font-size="5.3" text-anchor="middle" fill="#50565c" font-family="Liberation Sans">HOURS</text><text x="0" y="12.3" font-size="12.6" text-anchor="middle" fill="#495057" font-family="Liberation Sans">2</text></svg>
<svg class="a" style="left:890.5px;top:196.2px" width="44" height="44" viewBox="-22 -22 44 44"><circle r="19.1" fill="#fff" stroke="#7b7e82" stroke-width="4.8"/><circle r="19.1" fill="none" stroke="#0ba55b" stroke-width="4.8" stroke-dasharray="20.00 120.01" transform="rotate(-90)"/><text x="0" y="-3.2" font-size="5.3" text-anchor="middle" fill="#50565c" font-family="Liberation Sans">MINUTES</text><text x="0" y="12.3" font-size="12.6" text-anchor="middle" fill="#495057" font-family="Liberation Sans">10</text></svg>
<svg class="a" style="left:945.2px;top:196.2px" width="44" height="44" viewBox="-22 -22 44 44"><circle r="19.1" fill="#fff" stroke="#7b7e82" stroke-width="4.8"/><circle r="19.1" fill="none" stroke="#f26a4f" stroke-width="4.8" stroke-dasharray="58.80 120.01" transform="rotate(-90)"/><text x="0" y="-3.2" font-size="5.3" text-anchor="middle" fill="#50565c" font-family="Liberation Sans">SECONDS</text><text x="0" y="12.3" font-size="12.6" text-anchor="middle" fill="#495057" font-family="Liberation Sans">29</text></svg>
<div class="a" style="left:831px;top:260px;width:21px;height:20.6px;background:#e3e7ea;border-radius:2px"></div>
<div class="t" style="left:831px;top:266px;width:21px;text-align:center;font-size:7.8px;color:#343a40">1</div>
<div class="a" style="left:856.2px;top:260px;width:21px;height:20.6px;background:#e3e7ea;border-radius:2px"></div>
<div class="t" style="left:856.2px;top:266px;width:21px;text-align:center;font-size:7.8px;color:#343a40">2</div>
<div class="a" style="left:1020px;top:167px;width:4px;height:222.6px;background:#bebec2;border-radius:1px"></div>
<svg class="a" style="left:11px;top:662.5px" width="12" height="12" viewBox="0 0 12 12"><path d="M0 1.7L4.9 1V5.7H0Z M5.7 0.9L12 0V5.7H5.7Z M0 6.4H4.9V11.1L0 10.4Z M5.7 6.4H12V12L5.7 11.2Z" fill="#fff"/></svg>
<div class="a" style="left:34px;top:654px;width:245px;height:29px;background:#f0f0f0;border-top:1px solid #d2d2d2"></div>
<svg class="a" style="left:42px;top:662px" width="12" height="12" viewBox="0 0 12 12"><circle cx="7.3" cy="4.7" r="3.7" fill="none" stroke="#222" stroke-width="1.1"/><path d="M4.6 7.4L0.8 11.2" stroke="#222" stroke-width="1.2"/></svg>
<div class="t" style="left:63px;top:663.5px;font-size:10.5px;color:#222">Type here to search</div>
<svg class="a" style="left:289px;top:663px" width="13" height="12" viewBox="0 0 13 12"><path d="M0.5 0.6H8.5M0.5 11.4H8.5" stroke="#fff" stroke-width="1"/><rect x="1.5" y="2.5" width="6" height="7" fill="none" stroke="#fff" stroke-width="1"/><path d="M11.5 0V12" stroke="#fff" stroke-width=".8"/><path d="M10.5 6H12.5" stroke="#fff" stroke-width="1"/></svg>
<div class="a" style="left:422px;top:654px;width:35px;height:29px;background:rgba(255,255,255,.17)"></div>
<div class="a" style="left:389.4px;top:681px;width:27.6px;height:2px;background:#8fc2ea"></div>
<div class="a" style="left:423.5px;top:681px;width:32.0px;height:2px;background:#8fc2ea"></div>
<div class="a" style="left:497.6px;top:681px;width:26.4px;height:2px;background:#8fc2ea"></div>
<div class="a" style="left:706.7px;top:681px;width:30.3px;height:2px;background:#8fc2ea"></div>
<svg class="a" style="left:325.5px;top:660.2px" width="14" height="17" viewBox="0 0 14 17"><defs><linearGradient id="ofg" x1="0" y1="0" x2="1" y2="0"><stop offset="0" stop-color="#c41e5a"/><stop offset=".5" stop-color="#e23b1c"/><stop offset="1" stop-color="#f0640a"/></linearGradient></defs><path d="M1.5 3.6L10 0.4L13.3 1.6V14.4L10 15.6L1.5 12.6Z" fill="url(#ofg)"/><path d="M4.2 4.8L9.3 3.2V12.8L4.2 11.4Z" fill="#202c36"/><path d="M1.5 12.6L9.3 12.8L10 15.6Z" fill="#d42a3c"/></svg>
<svg class="a" style="left:358.59999999999997px;top:660.0px" width="17.6" height="17" viewBox="0 0 17.6 17"><path d="M5.5 4.5V3Q5.5 1 8.8 1Q12 1 12 3V4.5" fill="none" stroke="#e8e8e8" stroke-width="1.3"/><rect x="0.8" y="4.5" width="16" height="12" fill="#f2f2f2"/><rect x="5.6" y="7.5" width="2.8" height="2.8" fill="#f25022"/><rect x="9.1" y="7.5" width="2.8" height="2.8" fill="#7fba00"/><rect x="5.6" y="11" width="2.8" height="2.8" fill="#00a4ef"/><rect x="9.1" y="11" width="2.8" height="2.8" fill="#ffb900"/></svg>
<svg class="a" style="left:395.5px;top:662.0px" width="16" height="13" viewBox="0 0 16 13"><path d="M0.5 1.5H6L7.5 3H15.5V12.5H0.5Z" fill="#e9b23a"/><rect x="0.5" y="4" width="15" height="8.5" fill="#ffd566"/><path d="M3.5 12.5V8H12.5V12.5H10.5V10H5.5V12.5Z" fill="#3b8ee0"/></svg>
<svg class="a" style="left:431.1px;top:660.5px" width="16" height="16" viewBox="0 0 16 16"><circle cx="8" cy="8" r="7.8" fill="#db4437"/><path d="M8 8L14.75 4.1A7.8 7.8 0 0 1 8 15.8Z" fill="#fcc934"/><path d="M8 8L8 15.8A7.8 7.8 0 0 1 1.25 4.1Z" fill="#1e9e4a"/><circle cx="8" cy="8" r="3.7" fill="#fff"/><circle cx="8" cy="8" r="2.8" fill="#4285f4"/></svg>
<svg class="a" style="left:465.65px;top:660.3px" width="17.5" height="16" viewBox="0 0 17.5 16"><path d="M0.5 5.5L8.8 0.5L17 5.5V16H0.5Z" fill="#0b63c1"/><path d="M1.8 4.4H15.8L8.8 8.6Z" fill="#f4f4f4"/><path d="M0.5 5.5L8.8 10.5L17 5.5V16H0.5Z" fill="#2ba6ef"/><path d="M0.5 16L8.8 9.5L17 16Z" fill="#4cc2ff"/></svg>
<svg class="a" style="left:501.7px;top:660.0px" width="17" height="17" viewBox="0 0 17 17"><defs><linearGradient id="edg" x1="0" y1="0" x2="1" y2="1"><stop offset="0" stop-color="#3bd27a"/><stop offset=".55" stop-color="#1a9de0"/><stop offset="1" stop-color="#0c59a4"/></linearGradient></defs><circle cx="8.5" cy="8.5" r="8.2" fill="url(#edg)"/><path d="M1.5 10.5Q2.5 16 8.5 16.5Q12.5 16.7 15 13.5Q11.5 15.5 8.5 13.5Q6 11.5 7 9Q8 7.5 10 7.5Q12 7.5 12.5 9.5Q13 5 9 4Q4 3.5 1.5 10.5Z" fill="#0c4f98"/><path d="M7.5 9.5Q8.5 7.8 10.5 8.3Q12 9 11.5 10.5Q9 12 7.5 9.5Z" fill="#1d3650"/></svg>
<svg class="a" style="left:537.1px;top:659.9px" width="17" height="17" viewBox="0 0 17 17"><rect x="0" y="0" width="17" height="17" fill="#fff"/><text x="8.5" y="11.5" font-size="12" font-weight="bold" text-anchor="middle" fill="#1a2433" font-family="Liberation Sans">a</text><path d="M3.5 12.8Q8.5 15 13.5 12.6" stroke="#f90" stroke-width="1.2" fill="none"/></svg>
<svg class="a" style="left:573.0px;top:659.8px" width="16" height="17" viewBox="0 0 16 17"><defs><linearGradient id="ffg" x1="0" y1="0" x2="0" y2="1"><stop offset="0" stop-color="#ffbd2e"/><stop offset=".6" stop-color="#ff5a2c"/><stop offset="1" stop-color="#e2166f"/></linearGradient></defs><circle cx="8" cy="9" r="7.3" fill="url(#ffg)"/><path d="M10 0.5Q15 3 15.3 8Q13.5 4.5 10.5 4Z" fill="#ffcf3a"/><circle cx="8" cy="9.2" r="3.8" fill="#7a3fe4"/><path d="M4 6Q6 4 9 5Q6 6 5.5 8Z" fill="#ff9a2a"/></svg>
<svg class="a" style="left:608.0px;top:660.4px" width="17" height="16" viewBox="0 0 17 16"><circle cx="13.5" cy="3.5" r="2.2" fill="#7b83eb"/><rect x="10.8" y="6.3" width="6" height="7.5" rx="2.5" fill="#7b83eb"/><circle cx="9.5" cy="2.8" r="2.6" fill="#5b63d3"/><path d="M5 5.5H13.3V11.5Q13.3 15.5 9.2 15.5Q5 15.5 5 11.5Z" fill="#6a72dc"/><rect x="0.5" y="4.2" width="8.8" height="8.8" rx="1" fill="#4b53bc"/><path d="M2.5 6.6H7.3M4.9 6.6V11.2" stroke="#fff" stroke-width="1.3"/></svg>
<svg class="a" style="left:644.0px;top:660.8000000000001px" width="16.2" height="15.6" viewBox="0 0 16.2 15.6"><rect x="0" y="0" width="16.2" height="15.6" rx="4.5" fill="#4a8cff"/><rect x="3" y="5" width="6.6" height="5.6" rx="1.2" fill="#fff"/><path d="M10.3 7L13.2 5.2V10.4L10.3 8.6Z" fill="#fff"/></svg>
<svg class="a" style="left:680.1px;top:660.9px" width="15" height="15" viewBox="0 0 15 15"><circle cx="7.5" cy="7.5" r="7.4" fill="#2a9fd8"/><path d="M3 7.3L11.6 3.8L10.2 11.3L7 9L5.8 11L5.6 8.4Z" fill="#fff" opacity=".95"/><path d="M5.6 8.4L10 5L7 9Z" fill="#c8daea"/></svg>
<svg class="a" style="left:715.0px;top:660.25px" width="16.6" height="16.7" viewBox="0 0 16.6 16.7"><rect x="0" y="0" width="16.6" height="16.7" fill="#1a1f8a"/><rect x="0.6" y="0.6" width="15.4" height="7.5" fill="#2c3aa8"/><text x="8.3" y="7.3" font-size="6.6" font-weight="bold" text-anchor="middle" fill="#fff" font-family="Liberation Sans">DEV</text><rect x="0.6" y="8.5" width="15.4" height="7.6" fill="#0d3aa8"/><text x="8.3" y="15" font-size="7" font-weight="bold" text-anchor="middle" fill="#46b8ff" font-family="Liberation Sans">C++</text></svg>
<svg class="a" style="left:798.5px;top:665.5px" width="10" height="6" viewBox="0 0 10 6"><path d="M0.7 5.3L5 1L9.3 5.3" fill="none" stroke="#fff" stroke-width="1"/></svg>
<svg class="a" style="left:819px;top:664px" width="14" height="9" viewBox="0 0 14 9"><rect x="1.5" y="2" width="11" height="6" fill="none" stroke="#fff" stroke-width="1"/><rect x="2.5" y="3" width="8" height="4" fill="#fff"/><rect x="12.5" y="3.8" width="1.3" height="2.4" fill="#fff"/><path d="M1 1L4 2" stroke="#fff" stroke-width=".8"/></svg>
<svg class="a" style="left:843px;top:662px" width="13" height="13" viewBox="0 0 13 13"><path d="M1 12A11 11 0 0 1 12 1M3.5 12A8.5 8.5 0 0 1 12 3.5M6 12A6 6 0 0 1 12 6M8.5 12A3.5 3.5 0 0 1 12 8.5" fill="none" stroke="#fff" stroke-width=".9" stroke-dasharray="1.2 1"/></svg>
<svg class="a" style="left:865px;top:663px" width="13" height="11" viewBox="0 0 13 11"><path d="M0.5 3.5H3L6 0.8V10.2L3 7.5H0.5Z" fill="none" stroke="#fff" stroke-width=".9"/><path d="M8 3.5Q9 5.5 8 7.5M10 2Q12 5.5 10 9" fill="none" stroke="#fff" stroke-width=".9"/></svg>
<svg class="a" style="left:890px;top:663px" width="13" height="12" viewBox="0 0 13 12"><circle cx="3.5" cy="8.5" r="2.5" fill="none" stroke="#fff" stroke-width="1"/><circle cx="8.5" cy="4.5" r="2.3" fill="none" stroke="#fff" stroke-width="1"/><path d="M5 7L7 5.5M10 2L12 0.5M10 6L12 8" stroke="#fff" stroke-width="1"/></svg>
<div class="t" style="left:915.7px;top:665.4px;font-size:7.8px;color:#e8eaea;transform:scaleY(1.2);transform-origin:0 6.6px">ENG</div>
<div class="t" style="left:943px;top:658.3px;font-size:8.8px;color:#fff">10:21 AM</div>
<div class="t" style="left:942.5px;top:672.2px;font-size:8.8px;color:#fff">11/1/2021</div>
<svg class="a" style="left:995px;top:663px" width="12" height="11" viewBox="0 0 12 11"><path d="M0.5 0.5H11V8.2H5L2.8 10.5V8.2H0.5Z" fill="#fff"/><path d="M2.3 2.6H9.2M2.3 4.4H9.2M2.3 6.2H7" stroke="#2b3a3a" stroke-width=".8"/></svg>
<div class="a" style="left:1000.6px;top:669px;width:10.8px;height:10.8px;border-radius:50%;background:#1b2222;border:1px solid #9aa2a2"></div>
<div class="t" style="left:1000.6px;top:670.6px;width:10.8px;text-align:center;font-size:7.5px;font-weight:bold;color:#fff">2</div>
<div class="a" style="left:1020.5px;top:654px;width:1px;height:29px;background:#5f6d6d"></div>
</body></html>
